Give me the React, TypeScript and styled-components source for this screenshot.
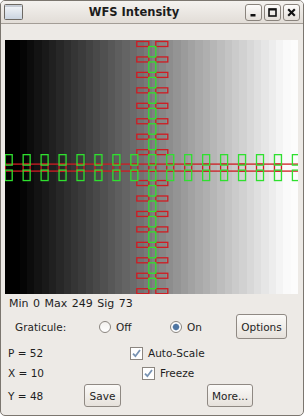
import * as React from 'react';
import styled, { createGlobalStyle } from 'styled-components';

const GlobalStyle = createGlobalStyle`
  html, body {
    margin: 0;
    padding: 0;
    background: #ffffff;
  }
  body {
    font-family: "DejaVu Sans", "Noto Sans", sans-serif;
    color: #1e1e1e;
  }
`;

// stepped grey ramp, black on the left, white on the right
const SCREEN_W = 293;
const SCREEN_H = 254;
const BANDS = 40;
const rampStops: string[] = [];
for (let k = 0; k < BANDS; k++) {
  const w = SCREEN_W / BANDS;
  const center = 5 + (k + 0.5) * w;
  const v = Math.max(0, Math.min(252, Math.round(((center - 18) / (292 - 18)) * 255)));
  rampStops.push(`rgb(${v},${v},${v}) ${(k * w).toFixed(2)}px ${((k + 1) * w).toFixed(2)}px`);
}
const ramp = `linear-gradient(to right, ${rampStops.join(', ')})`;

const Frame = styled.div`
  width: 304px;
  height: 416px;
  box-sizing: border-box;
  border: 1px solid #7b766f;
  border-radius: 5px;
  background: #edeae6;
  display: flex;
  flex-direction: column;
  overflow: hidden;
`;

const TitleBar = styled.div`
  height: 22px;
  flex: none;
  display: flex;
  align-items: center;
  padding: 0 3px;
  background: linear-gradient(#f4f2ef, #e2ddd7);
  border-bottom: 1px solid #a39d96;
`;

const Title = styled.div`
  flex: 1;
  text-align: center;
  font-family: "DejaVu Sans", sans-serif;
  font-weight: bold;
  font-size: 11.5px;
  color: #1c1c1c;
`;

const TitleButtons = styled.div`
  display: flex;
  gap: 2px;
`;

const WinButton = styled.div`
  width: 17px;
  height: 17px;
  box-sizing: border-box;
  border: 1px solid #8a847d;
  border-radius: 3px;
  background: linear-gradient(#fdfcfb, #e4dfd9);
  display: flex;
  align-items: center;
  justify-content: center;
`;

const Body = styled.div`
  flex: 1;
  display: flex;
  flex-direction: column;
  padding: 16px 0 0 4px;
`;

const Screen = styled.div`
  width: ${SCREEN_W}px;
  height: ${SCREEN_H}px;
  flex: none;
  background: ${ramp};
  overflow: hidden;
  svg {
    display: block;
  }
`;

const Stats = styled.div`
  height: 19px;
  display: flex;
  align-items: center;
  padding-left: 4px;
  font-size: 11px;
  word-spacing: 1px;
`;

const Row = styled.div<{ $h: number; $pad: number; $top?: number }>`
  height: ${p => p.$h}px;
  margin-top: ${p => p.$top ?? 0}px;
  display: flex;
  align-items: center;
  padding-left: ${p => p.$pad}px;
  font-size: 10.5px;
`;

const Cell = styled.div<{ $w: number }>`
  width: ${p => p.$w}px;
  flex: none;
  display: flex;
  align-items: center;
`;

const Radio = styled.span<{ $on?: boolean }>`
  width: 12px;
  height: 12px;
  box-sizing: border-box;
  border-radius: 50%;
  border: 1px solid #8b8680;
  background: ${p =>
    p.$on
      ? 'radial-gradient(circle, #4f76a3 0 2.6px, #9fb4cc 3.2px, #ffffff 3.8px)'
      : 'linear-gradient(#f3f1ee, #ffffff)'};
  margin-right: 5px;
  flex: none;
`;

const Check = styled.span`
  width: 13px;
  height: 13px;
  box-sizing: border-box;
  border: 1px solid #8b8680;
  background: #ffffff;
  margin-right: 5px;
  flex: none;
  display: flex;
  align-items: center;
  justify-content: center;
`;

const Button = styled.div<{ $w: number; $h: number }>`
  width: ${p => p.$w}px;
  height: ${p => p.$h}px;
  box-sizing: border-box;
  border: 1px solid #8f8983;
  border-radius: 3px;
  background: linear-gradient(#fbfaf8, #e6e1db);
  display: flex;
  align-items: center;
  justify-content: center;
  font-size: 10.5px;
  flex: none;
`;

function Graticule() {
  const cx = (j: number) => 3.7 + 17.95 * j;
  const cy = (i: number) => 4 + 15.45 * i;
  const red = '#cf1c22';
  const green = '#2fe02f';
  const c = cx(8);
  const m = cy(8);
  const items: React.ReactNode[] = [];

  // horizontal red band
  for (let j = 0; j < 16; j++) {
    items.push(
      <rect key={`hr${j}`} x={cx(j) - 3.5} y={m - 3.5} width={cx(j + 1) - cx(j) + 7} height={7} stroke={red} />
    );
  }
  // vertical red ticks
  for (let i = 0; i <= 16; i++) {
    if (i === 8) continue;
    items.push(<rect key={`vl${i}`} x={c - 15.5} y={cy(i) - 2.5} width={12} height={5} stroke={red} />);
    items.push(<rect key={`vr${i}`} x={c + 3.5} y={cy(i) - 2.5} width={12} height={5} stroke={red} />);
  }
  // vertical green column
  for (let i = 0; i < 16; i++) {
    items.push(
      <rect key={`vg${i}`} x={c - 3.5} y={cy(i) + 2.5} width={7} height={cy(i + 1) - cy(i) - 5} stroke={green} />
    );
  }
  // horizontal green pairs
  for (let j = 0; j <= 16; j++) {
    if (j === 8) continue;
    items.push(<rect key={`ga${j}`} x={cx(j) - 3.5} y={cy(7) + 2.5} width={7} height={m - cy(7) - 5} stroke={green} />);
    items.push(<rect key={`gb${j}`} x={cx(j) - 3.5} y={m + 2.5} width={7} height={cy(9) - m - 5} stroke={green} />);
  }

  return (
    <svg width={SCREEN_W} height={SCREEN_H} viewBox={`0 0 ${SCREEN_W} ${SCREEN_H}`} fill="none" strokeWidth={1.3}>
      {items}
    </svg>
  );
}

function WindowIcon() {
  return (
    <svg width="19" height="16" viewBox="0 0 19 16">
      <defs>
        <linearGradient id="wi" x1="0" y1="0" x2="0" y2="1">
          <stop offset="0" stopColor="#f6f8fb" />
          <stop offset="1" stopColor="#c9d3df" />
        </linearGradient>
      </defs>
      <rect x="0.5" y="0.5" width="18" height="15" rx="1" fill="url(#wi)" stroke="#6d6963" />
      <line x1="1" y1="2" x2="18" y2="2" stroke="#9ba6b4" />
    </svg>
  );
}

function CheckMark() {
  return (
    <svg width="9" height="9" viewBox="0 0 9 9">
      <path d="M1 4.6 L3.4 7.2 L8 1" fill="none" stroke="#7893b3" strokeWidth="1.8" />
    </svg>
  );
}

export default function App() {
  return (
    <>
      <GlobalStyle />
      <Frame>
        <TitleBar>
          <WindowIcon />
          <Title>WFS Intensity</Title>
          <TitleButtons>
            <WinButton>
              <svg width="9" height="9" viewBox="0 0 9 9">
                <rect x="1.5" y="6" width="5" height="2.5" fill="#111" />
              </svg>
            </WinButton>
            <WinButton>
              <svg width="9" height="9" viewBox="0 0 9 9">
                <rect x="1" y="1" width="7" height="7" fill="none" stroke="#111" strokeWidth="1.6" />
                <line x1="1" y1="1.6" x2="8" y2="1.6" stroke="#111" strokeWidth="1.6" />
              </svg>
            </WinButton>
            <WinButton>
              <svg width="9" height="9" viewBox="0 0 9 9">
                <path d="M1.2 1.2 L7.8 7.8 M7.8 1.2 L1.2 7.8" stroke="#111" strokeWidth="2.1" />
              </svg>
            </WinButton>
          </TitleButtons>
        </TitleBar>
        <Body>
          <Screen>
            <Graticule />
          </Screen>
          <Stats>Min 0 Max 249 Sig 73</Stats>
          <Row $h={27} $pad={10}>
            <Cell $w={84}>Graticule:</Cell>
            <Cell $w={71}>
              <Radio />
              Off
            </Cell>
            <Cell $w={66}>
              <Radio $on />
              On
            </Cell>
            <Button $w={51} $h={25}>Options</Button>
          </Row>
          <Row $h={20} $pad={3} $top={3}>
            <Cell $w={122}>P = 52</Cell>
            <Check>
              <CheckMark />
            </Check>
            Auto-Scale
          </Row>
          <Row $h={20} $pad={3}>
            <Cell $w={134}>X = 10</Cell>
            <Check>
              <CheckMark />
            </Check>
            Freeze
          </Row>
          <Row $h={25} $pad={3}>
            <Cell $w={76}>Y = 48</Cell>
            <Button $w={37} $h={23}>Save</Button>
            <Cell $w={86} />
            <Button $w={46} $h={23}>More...</Button>
          </Row>
        </Body>
      </Frame>
    </>
  );
}
